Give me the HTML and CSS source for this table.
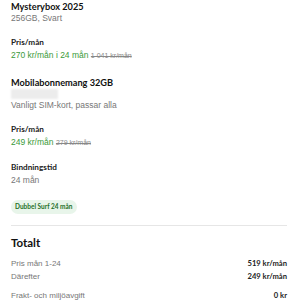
FILE: index.html
```html
<!DOCTYPE html>
<html lang="sv">
<head>
<meta charset="utf-8">
<link rel="stylesheet" href="styles.css">
</head>
<body>
<div class="cart">
  <section class="item">
    <h2 class="title">Mysterybox 2025</h2>
    <div class="sub">256GB, Svart</div>
    <div class="field">
      <div class="label">Pris/mån</div>
      <div class="price"><span class="now">270 kr/mån i 24 mån</span> <s class="old">1 041 kr/mån</s></div>
    </div>
  </section>
  <section class="item item2">
    <h2 class="title">Mobilabonnemang 32GB</h2>
    <div class="blur"></div>
    <div class="sub sub2">Vanligt SIM-kort, passar alla</div>
    <div class="field">
      <div class="label">Pris/mån</div>
      <div class="price"><span class="now">249 kr/mån</span> <s class="old">279 kr/mån</s></div>
    </div>
    <div class="field">
      <div class="label">Bindningstid</div>
      <div class="value">24 mån</div>
    </div>
    <div class="badge">Dubbel Surf 24 mån</div>
  </section>
  <hr class="divider">
  <section class="total">
    <h2 class="total-title">Totalt</h2>
    <div class="row"><span>Pris mån 1-24</span><b>519 kr/mån</b></div>
    <div class="row"><span>Därefter</span><b>249 kr/mån</b></div>
    <div class="row row-gap"><span>Frakt- och miljöavgift</span><b>0 kr</b></div>
  </section>
</div>
</body>
</html>
```

FILE: styles.css
```css
html, body {
  margin: 0;
  padding: 0;
  background: #fff;
}
body {
  font-family: "Liberation Sans", Arial, sans-serif;
  color: #222;
}
.cart {
  padding: 0 8px 0 11px;
  display: flex;
  flex-direction: column;
}
.item {
  display: flex;
  flex-direction: column;
}
.title {
  margin: 0;
  font-family: "Lato", sans-serif;
  font-weight: 700;
  font-size: 9.2px;
  line-height: 13px;
  color: #111;
}
.sub {
  font-size: 8.5px;
  line-height: 10px;
  color: #777;
}
.sub2 {
  margin-top: 1.5px;
}
.field {
  margin-top: 14px;
}
.label {
  font-family: "Lato", sans-serif;
  font-weight: 700;
  font-size: 8.2px;
  line-height: 10px;
  color: #222;
}
.price {
  margin-top: 3px;
  font-size: 8.5px;
  line-height: 10px;
}
.now {
  color: #3a9a3a;
}
.old {
  color: #888;
  font-size: 7px;
}
.value {
  margin-top: 3px;
  font-size: 8.5px;
  line-height: 10px;
  color: #777;
}
.item2 {
  margin-top: 14.5px;
}
.blur {
  width: 47px;
  height: 10px;
  background: #ececec;
  filter: blur(1px);
}
.badge {
  align-self: flex-start;
  margin-top: 14.5px;
  height: 14px;
  padding: 0 4px;
  border-radius: 7px;
  background: #e8f5ea;
  color: #1f7028;
  font-family: "Lato", sans-serif;
  font-weight: 700;
  font-size: 6.5px;
  line-height: 14px;
}
.divider {
  margin: 11px 0 0 0;
  border: 0;
  border-top: 1px solid #e6e6e6;
  height: 0;
}
.total {
  margin-top: 10px;
}
.total-title {
  margin: 0 0 7.5px 0;
  font-family: "Lato", sans-serif;
  font-weight: 700;
  font-size: 11.5px;
  line-height: 14px;
  color: #111;
}
.row {
  display: flex;
  justify-content: space-between;
  font-size: 8px;
  line-height: 13px;
  color: #777;
}
.row b {
  font-family: "Lato", sans-serif;
  font-weight: 700;
  font-size: 7.6px;
  color: #222;
}
.row-gap {
  margin-top: 6px;
}
```
